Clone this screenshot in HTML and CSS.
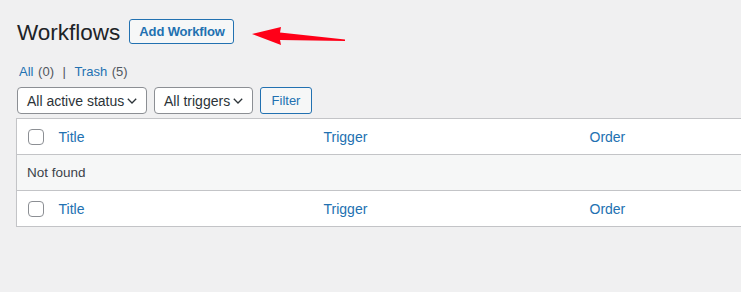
FILE: index.html
```html
<!DOCTYPE html>
<html>
<head>
<meta charset="utf-8">
<link rel="stylesheet" href="styles.css">
</head>
<body>
<div class="wrap">
  <div class="title-row">
    <h1 class="page-title">Workflows</h1>
    <a class="btn-add">Add Workflow</a>
  </div>
  <svg class="arrow" width="741" height="60" viewBox="0 0 741 60">
    <polygon points="252,34 281,27 280,32.5 345,39.5 345,41 280,40 281,45" fill="#ff0018"/>
  </svg>
  <div class="subsub">
    <a class="link">All</a> <span class="count">(0)</span>
    <span class="sep">|</span>
    <a class="link">Trash</a> <span class="count">(5)</span>
  </div>
  <div class="filters">
    <div class="select sel-status"><span>All active status</span>
      <svg class="chev" width="10" height="6" viewBox="0 0 10 6"><path d="M0.8 0.8 L5 5 L9.2 0.8" fill="none" stroke="#2c3338" stroke-width="1.3"/></svg>
    </div>
    <div class="select sel-trig"><span>All triggers</span>
      <svg class="chev" width="10" height="6" viewBox="0 0 10 6"><path d="M0.8 0.8 L5 5 L9.2 0.8" fill="none" stroke="#2c3338" stroke-width="1.3"/></svg>
    </div>
    <a class="btn-filter">Filter</a>
  </div>
  <table class="list">
    <colgroup>
      <col class="c-check"><col class="c-title"><col class="c-trig"><col class="c-order">
    </colgroup>
    <thead>
      <tr class="head">
        <td class="check"><span class="cb"></span></td>
        <th>Title</th>
        <th>Trigger</th>
        <th>Order</th>
      </tr>
    </thead>
    <tbody>
      <tr class="empty"><td colspan="4">Not found</td></tr>
    </tbody>
    <tfoot>
      <tr class="foot">
        <td class="check"><span class="cb"></span></td>
        <th>Title</th>
        <th>Trigger</th>
        <th>Order</th>
      </tr>
    </tfoot>
  </table>
</div>
</body>
</html>
```
FILE: styles.css
```css
html, body {
  margin: 0;
  padding: 0;
  background: #f0f0f1;
  overflow: hidden;
  font-family: "Liberation Sans", Arial, sans-serif;
  color: #3c434a;
}
.wrap {
  padding-left: 16px;
  width: 900px;
}
.title-row {
  display: flex;
  align-items: center;
  height: 25px;
  padding-top: 19px;
  gap: 9px;
}
.page-title {
  margin: 0 0 0 1px;
  font-size: 22.5px;
  font-weight: 400;
  color: #1d2327;
  line-height: 25px;
  position: relative;
  top: 1px;
}
.btn-add {
  display: flex;
  align-items: center;
  box-sizing: border-box;
  height: 25px;
  padding: 0 8px 0 9px;
  border: 1px solid #2271b1;
  border-radius: 3px;
  background: #f6f7f7;
  color: #2271b1;
  font-size: 13px;
  font-weight: 700;
  letter-spacing: -0.15px;
}
.arrow {
  position: absolute;
  left: 0;
  top: 0;
  pointer-events: none;
}
.subsub {
  margin-top: 18px;
  margin-left: 3px;
  font-size: 13px;
  line-height: 20px;
  height: 20px;
}
.link { color: #2271b1; }
.count { color: #50575e; margin-left: 1px; }
.sep { color: #50575e; margin: 0 5px; }
.filters {
  display: flex;
  gap: 7px;
  margin-top: 5px;
  margin-left: 1px;
  height: 27px;
}
.select {
  box-sizing: border-box;
  height: 27px;
  display: flex;
  align-items: center;
  justify-content: space-between;
  padding: 0 9px 0 9px;
  border: 1px solid #8c8f94;
  border-radius: 4px;
  background: #fff;
  color: #2c3338;
  font-size: 14px;
}
.sel-status { width: 130px; }
.sel-trig { width: 99px; }
.chev { margin-top: 1px; flex: none; }
.btn-filter {
  box-sizing: border-box;
  height: 27px;
  width: 52px;
  display: flex;
  align-items: center;
  justify-content: center;
  border: 1px solid #2271b1;
  border-radius: 3px;
  background: #f6f7f7;
  color: #2271b1;
  font-size: 13px;
}
.list {
  margin-top: 4px;
  width: 830px;
  border-collapse: collapse;
  table-layout: fixed;
  background: #fff;
  border: 1px solid #c3c4c7;
  box-shadow: 0 1px 1px rgba(0,0,0,0.04);
}
.c-check { width: 32px; }
.c-title { width: 265px; }
.c-trig { width: 266px; }
.list th, .list td {
  height: 36px;
  padding: 0 10px;
  text-align: left;
  vertical-align: middle;
  box-sizing: border-box;
}
.list th {
  font-weight: 400;
  font-size: 14px;
  color: #2271b1;
}
.head th, .head td { border-bottom: 1px solid #c3c4c7; }
.empty td {
  background: #f6f7f7;
  border-bottom: 1px solid #c3c4c7;
  font-size: 13.5px;
  color: #3c434a;
}
.list td.check { padding: 0 0 0 11px; }
.cb {
  display: block;
  box-sizing: border-box;
  width: 16px;
  height: 16px;
  border: 1px solid #8c8f94;
  border-radius: 4px;
  background: #fff;
}
```
